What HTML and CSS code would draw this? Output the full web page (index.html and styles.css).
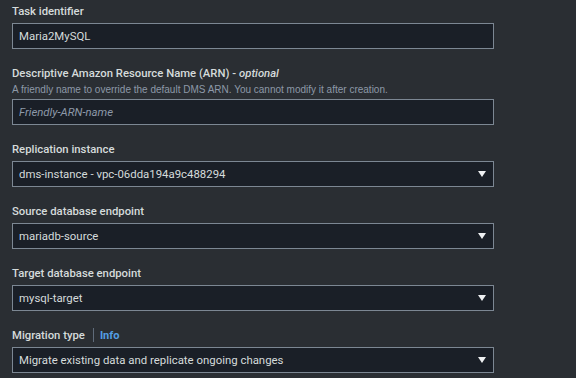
FILE: index.html
```html
<!DOCTYPE html>
<html lang="en">
<head>
    <meta charset="UTF-8">
    <meta name="viewport" content="width=device-width, initial-scale=1.0">
    <title>Create database migration task</title>
    <link rel="stylesheet" href="styles.css">
</head>
<body>
    <form class="task-form">
        <div class="form-group">
            <label for="task-id">Task identifier</label>
            <input type="text" id="task-id" value="Maria2MySQL">
        </div>
        <div class="form-group">
            <label for="arn">Descriptive Amazon Resource Name (ARN) - <em>optional</em></label>
            <p class="hint">A friendly name to override the default DMS ARN. You cannot modify it after creation.</p>
            <input type="text" id="arn" placeholder="Friendly-ARN-name">
        </div>
        <div class="form-group">
            <label for="instance">Replication instance</label>
            <div class="select">
                <span>dms-instance - vpc-06dda194a9c488294</span>
                <i class="caret"></i>
            </div>
        </div>
        <div class="form-group">
            <label for="source">Source database endpoint</label>
            <div class="select">
                <span>mariadb-source</span>
                <i class="caret"></i>
            </div>
        </div>
        <div class="form-group">
            <label for="target">Target database endpoint</label>
            <div class="select">
                <span>mysql-target</span>
                <i class="caret"></i>
            </div>
        </div>
        <div class="form-group">
            <label for="migration">Migration type<span class="divider"></span><a href="#" class="info">Info</a></label>
            <div class="select">
                <span>Migrate existing data and replicate ongoing changes</span>
                <i class="caret"></i>
            </div>
        </div>
    </form>
</body>
</html>
```

FILE: styles.css
```css
body {
    margin: 0;
    background-color: #2a2e33;
    color: #d5dbdb;
    font-family: Roboto, "Liberation Sans", Arial, sans-serif;
    font-size: 12px;
}
.task-form {
    width: 482px;
    padding: 2px 12px 0;
}
.form-group {
    margin-bottom: 15px;
}
label {
    display: flex;
    align-items: center;
    height: 18px;
    margin-bottom: 3px;
    font-size: 11.3px;
    font-weight: 500;
    color: #d5dbdb;
}
label em {
    margin-left: 3px;
}
.hint {
    margin: -1px 0 3px;
    font-family: "Liberation Sans", Arial, sans-serif;
    font-size: 10px;
    color: #8d99a8;
    line-height: 12px;
}
input,
.select {
    display: flex;
    align-items: center;
    width: 100%;
    height: 26px;
    padding: 0 7px 0 6px;
    box-sizing: border-box;
    background-color: #1a1f27;
    border: 1px solid #7c8793;
    color: #d5dbdb;
    font-family: inherit;
    font-size: 11.4px;
}
input::placeholder {
    color: #8d99a8;
    font-style: italic;
}
.select span {
    flex: 1;
}
.caret {
    width: 0;
    height: 0;
    border-left: 4px solid transparent;
    border-right: 4px solid transparent;
    border-top: 6px solid #eef0f2;
}
.divider {
    width: 1px;
    height: 14px;
    margin: 0 6px 0 8px;
    background-color: #5f6b7a;
}
.info {
    color: #539fe5;
    text-decoration: none;
    font-size: 11px;
    font-weight: bold;
}
```
